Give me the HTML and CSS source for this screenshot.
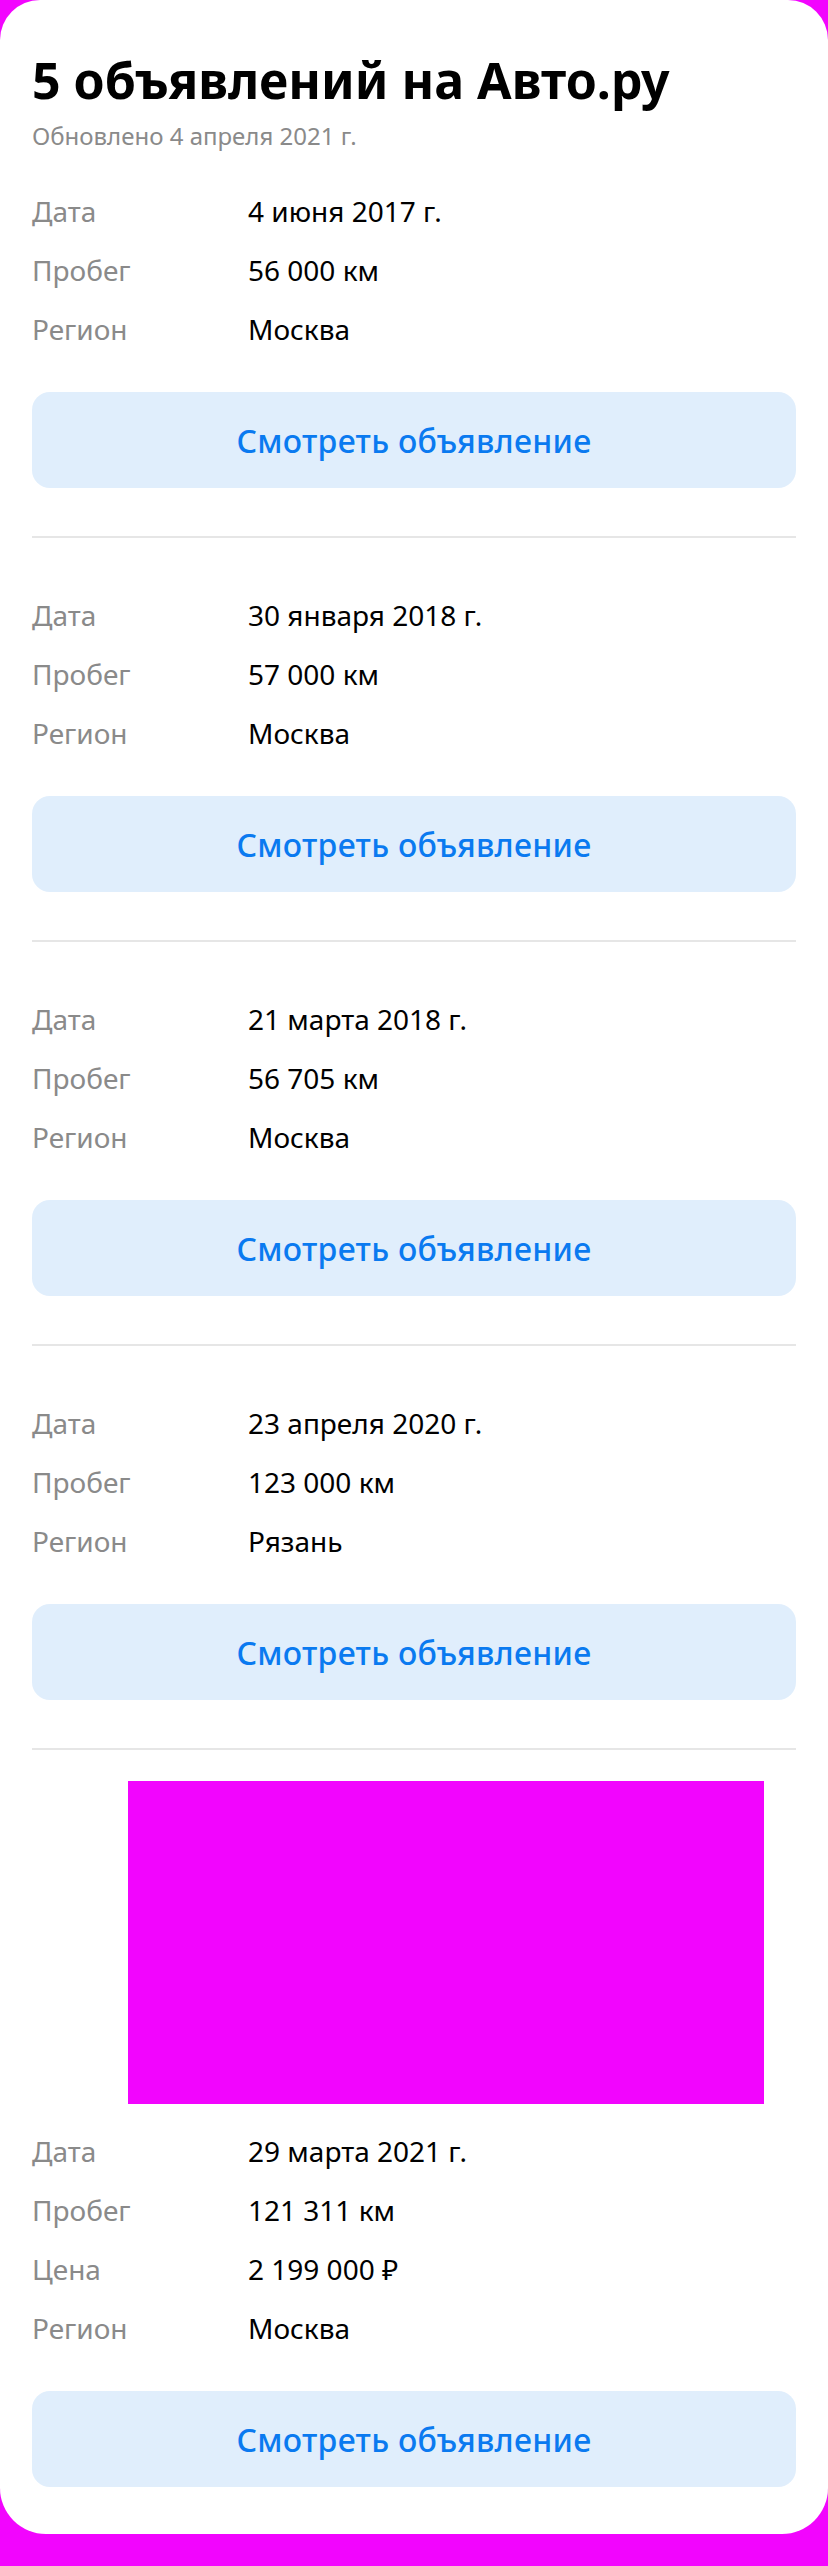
FILE: index.html
```html
<!DOCTYPE html>
<html lang="ru">
<head>
<meta charset="utf-8">
<link rel="stylesheet" href="styles.css">
</head>
<body>
<div class="card">
  <header class="head">
    <h1 class="title">5 объявлений на Авто.ру</h1>
    <div class="updated">Обновлено 4 апреля 2021 г.</div>
  </header>

  <section class="offer first">
    <div class="rows">
      <div class="label">Дата</div><div class="value">4 июня 2017 г.</div>
      <div class="label">Пробег</div><div class="value">56 000 км</div>
      <div class="label">Регион</div><div class="value">Москва</div>
    </div>
    <a class="btn">Смотреть объявление</a>
  </section>

  <section class="offer">
    <div class="rows">
      <div class="label">Дата</div><div class="value">30 января 2018 г.</div>
      <div class="label">Пробег</div><div class="value">57 000 км</div>
      <div class="label">Регион</div><div class="value">Москва</div>
    </div>
    <a class="btn">Смотреть объявление</a>
  </section>

  <section class="offer">
    <div class="rows">
      <div class="label">Дата</div><div class="value">21 марта 2018 г.</div>
      <div class="label">Пробег</div><div class="value">56 705 км</div>
      <div class="label">Регион</div><div class="value">Москва</div>
    </div>
    <a class="btn">Смотреть объявление</a>
  </section>

  <section class="offer">
    <div class="rows">
      <div class="label">Дата</div><div class="value">23 апреля 2020 г.</div>
      <div class="label">Пробег</div><div class="value">123 000 км</div>
      <div class="label">Регион</div><div class="value">Рязань</div>
    </div>
    <a class="btn">Смотреть объявление</a>
  </section>

  <section class="offer with-photo">
    <div class="photo"></div>
    <div class="rows">
      <div class="label">Дата</div><div class="value">29 марта 2021 г.</div>
      <div class="label">Пробег</div><div class="value">121 311 км</div>
      <div class="label">Цена</div><div class="value">2 199 000 ₽</div>
      <div class="label">Регион</div><div class="value">Москва</div>
    </div>
    <a class="btn">Смотреть объявление</a>
  </section>
</div>
</body>
</html>
```

FILE: styles.css
```css
html, body {
  margin: 0;
  padding: 0;
}
body {
  background: #f205fe;
  font-family: "Noto Sans", "Open Sans", sans-serif;
  color: #000;
  height: 2566px;
}
.card {
  background: #fff;
  border-radius: 40px 40px 46px 46px;
  padding: 0 32px 47px;
}
.head {
  padding-top: 50px;
}
.title {
  margin: 0;
  font-size: 50px;
  line-height: 60px;
  font-weight: 700;
  letter-spacing: 0;
}
.updated {
  font-size: 24px;
  line-height: 32px;
  color: #8a8a8a;
  margin-top: 10px;
}
.offer {
  padding-top: 48px;
  padding-bottom: 48px;
  border-top: 2px solid #e6e6e6;
}
.offer.first {
  border-top: none;
  padding-top: 30px;
}
.offer:last-child {
  padding-bottom: 0;
}
.with-photo {
  padding-top: 31px;
}
.photo {
  width: 636px;
  height: 323px;
  margin-left: 96px;
  margin-bottom: 18px;
  background: #f205fe;
}
.rows {
  display: grid;
  grid-template-columns: 216px 1fr;
  font-size: 28px;
  line-height: 59px;
  margin-bottom: 33px;
}
.label {
  color: #8a8a8a;
}
.value {
  color: #000;
}
.btn {
  display: flex;
  align-items: center;
  justify-content: center;
  height: 96px;
  border-radius: 18px;
  background: #e0eefc;
  color: #0a7af0;
  font-size: 32px;
  font-weight: 500;
  letter-spacing: 0.3px;
  text-decoration: none;
}
```
